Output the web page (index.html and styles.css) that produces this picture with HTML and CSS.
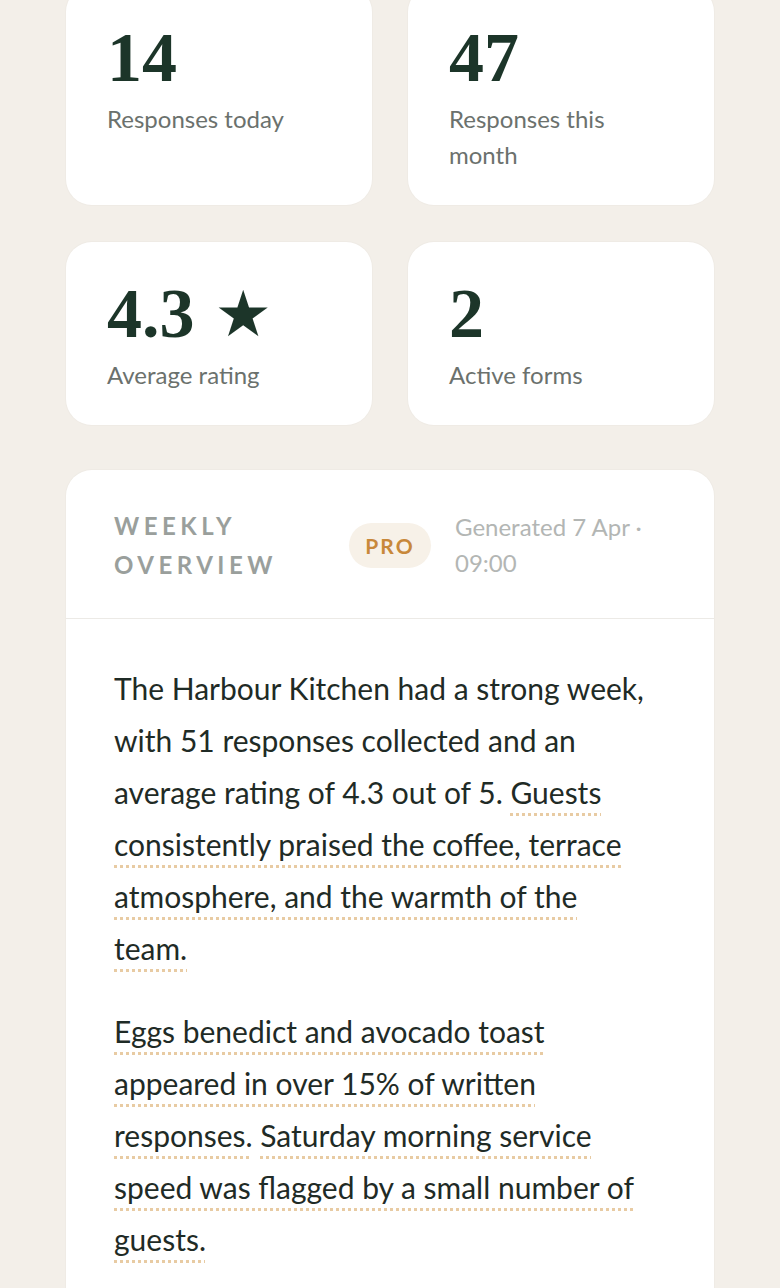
FILE: index.html
```
<!DOCTYPE html>
<html lang="en">
<head>
    <meta charset="UTF-8">
    <meta name="viewport" content="width=device-width, initial-scale=1.0">
    <title>Dashboard</title>
    <link rel="stylesheet" href="styles.css">
</head>
<body>
    <main class="page">
        <section class="stats">
            <div class="stat-card">
                <div class="stat-value">14</div>
                <div class="stat-label">Responses today</div>
            </div>
            <div class="stat-card">
                <div class="stat-value">47</div>
                <div class="stat-label">Responses this month</div>
            </div>
            <div class="stat-card">
                <div class="stat-value">4.3<span class="star">★</span></div>
                <div class="stat-label">Average rating</div>
            </div>
            <div class="stat-card">
                <div class="stat-value">2</div>
                <div class="stat-label">Active forms</div>
            </div>
        </section>

        <section class="overview">
            <div class="overview-head">
                <h3 class="overview-title">Weekly overview</h3>
                <span class="badge">PRO</span>
                <span class="overview-meta">Generated 7 Apr · 09:00</span>
            </div>
            <div class="overview-body">
                <p>The Harbour Kitchen had a strong week, with 51 responses collected and an average rating of 4.3 out of 5. <span class="quote">Guests consistently praised the coffee, terrace atmosphere, and the warmth of the team.</span></p>
                <p><span class="quote">Eggs benedict and avocado toast appeared in over 15% of written responses.</span> <span class="quote">Saturday morning service speed was flagged by a small number of guests.</span></p>
            </div>
        </section>
    </main>
</body>
</html>
```

FILE: styles.css
```
body {
    margin: 0;
    background-color: #f3efe9;
    font-family: 'Lato', 'Open Sans', sans-serif;
    color: #1f2b26;
}
.page {
    padding: 0 66px 40px;
    margin-top: -14px;
}
.stats {
    display: grid;
    grid-template-columns: 1fr 1fr;
    gap: 37px 36px;
}
.stat-card {
    background-color: #fff;
    border-radius: 26px;
    padding: 37px 40px 32px 41px;
    box-shadow: 0 0 0 1px #efebe5;
}
.stat-value {
    font-family: 'Liberation Serif', serif;
    font-weight: 700;
    font-size: 70px;
    line-height: 1;
    color: #1c3529;
}
.stat-value .star {
    font-family: 'DejaVu Sans', sans-serif;
    font-size: 64px;
    margin-left: 20px;
    vertical-align: 1px;
}
.stat-label {
    margin-top: 8px;
    font-size: 24px;
    line-height: 36px;
    color: #6b716d;
}

.overview {
    margin-top: 45px;
    background-color: #fff;
    border-radius: 26px 26px 0 0;
    box-shadow: 0 0 0 1px #efebe5;
}
.overview-head {
    display: flex;
    align-items: center;
    gap: 24px;
    padding: 36px 48px 34px;
    border-bottom: 1px solid #eceae6;
}
.overview-title {
    flex: 1;
    margin: 0;
    font-size: 24px;
    font-weight: 700;
    line-height: 39px;
    letter-spacing: 4.5px;
    text-transform: uppercase;
    color: #9a9f9c;
}
.badge {
    flex: none;
    width: 82px;
    height: 45px;
    line-height: 45px;
    text-align: center;
    border-radius: 23px;
    background-color: #f7f1e8;
    color: #c8883a;
    font-size: 21px;
    font-weight: 700;
    letter-spacing: 2px;
}
.overview-meta {
    flex: 1;
    font-size: 24px;
    line-height: 36px;
    color: #b3b6b4;
}
.overview-body {
    padding: 43px 60px 40px 48px;
}
.overview-body p {
    margin: 0 0 31px;
    font-size: 30px;
    line-height: 52px;
}
.quote {
    text-decoration: underline dotted #e8cba3;
    text-decoration-thickness: 3px;
    text-underline-offset: 9px;
}
```
